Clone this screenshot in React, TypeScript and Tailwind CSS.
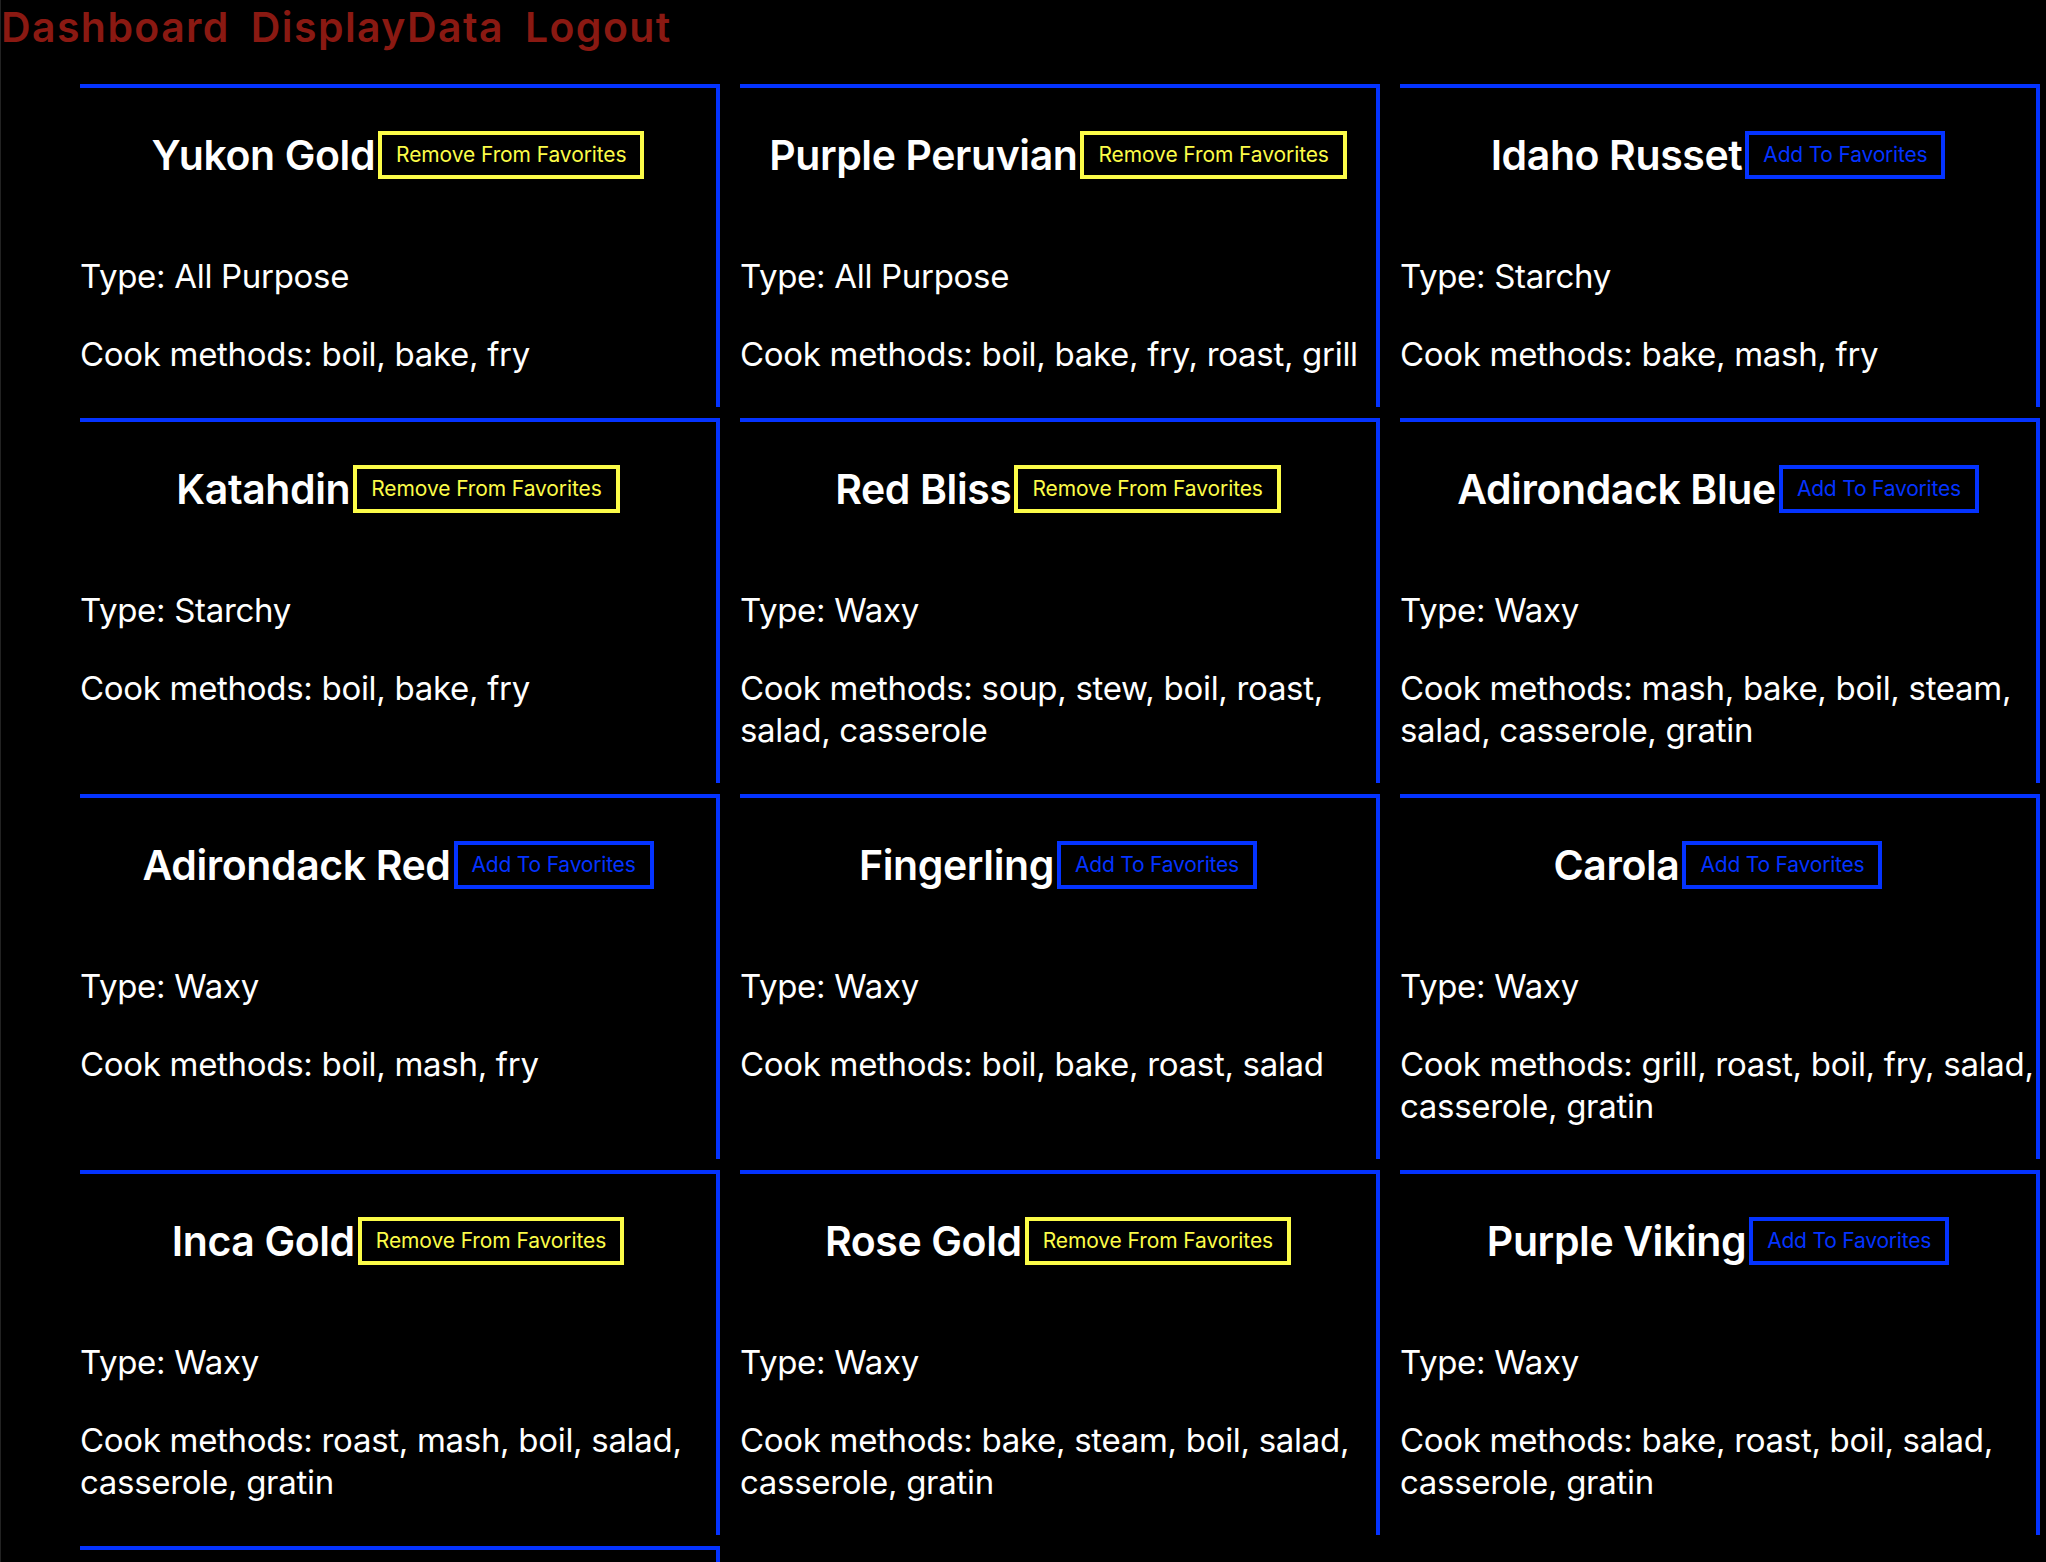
import React from "react";

type Potato = {
  name: string;
  type: string;
  methods: string[];
  favorite: boolean;
};

const potatoes: Potato[] = [
  { name: "Yukon Gold", type: "All Purpose", methods: ["boil", "bake", "fry"], favorite: true },
  { name: "Purple Peruvian", type: "All Purpose", methods: ["boil", "bake", "fry", "roast", "grill"], favorite: true },
  { name: "Idaho Russet", type: "Starchy", methods: ["bake", "mash", "fry"], favorite: false },
  { name: "Katahdin", type: "Starchy", methods: ["boil", "bake", "fry"], favorite: true },
  { name: "Red Bliss", type: "Waxy", methods: ["soup", "stew", "boil", "roast", "salad", "casserole"], favorite: true },
  { name: "Adirondack Blue", type: "Waxy", methods: ["mash", "bake", "boil", "steam", "salad", "casserole", "gratin"], favorite: false },
  { name: "Adirondack Red", type: "Waxy", methods: ["boil", "mash", "fry"], favorite: false },
  { name: "Fingerling", type: "Waxy", methods: ["boil", "bake", "roast", "salad"], favorite: false },
  { name: "Carola", type: "Waxy", methods: ["grill", "roast", "boil", "fry", "salad", "casserole", "gratin"], favorite: false },
  { name: "Inca Gold", type: "Waxy", methods: ["roast", "mash", "boil", "salad", "casserole", "gratin"], favorite: true },
  { name: "Rose Gold", type: "Waxy", methods: ["bake", "steam", "boil", "salad", "casserole", "gratin"], favorite: true },
  { name: "Purple Viking", type: "Waxy", methods: ["bake", "roast", "boil", "salad", "casserole", "gratin"], favorite: false },
  { name: "Kennebec", type: "Starchy", methods: ["fry", "bake", "mash"], favorite: false },
];

const PotatoCard = ({ potato }: { potato: Potato }) => {
  return (
    <div className="border-t-4 border-r-4 border-[#0433ff] pb-[32px]">
      {/* title + favorite toggle */}
      <div className="mt-[43px] flex items-center justify-center gap-[3px]">
        <h2 className="text-[41px] font-semibold leading-[48px] tracking-[-0.4px] text-white">
          {potato.name}
        </h2>
        {potato.favorite ? (
          <button className="h-[48px] border-4 border-[#fcfc48] px-[14px] text-[21px] leading-[26px] tracking-[-0.1px] text-[#fcfc48]">
            Remove From Favorites
          </button>
        ) : (
          <button className="h-[48px] border-4 border-[#0433ff] px-[14px] text-[21px] leading-[26px] tracking-[-0.2px] text-[#0433ff]">
            Add To Favorites
          </button>
        )}
      </div>
      <p className="mt-[76px] text-[33px] leading-[42px] tracking-[-0.3px] text-white">
        Type: {potato.type}
      </p>
      <p className="mt-[36px] text-[33px] leading-[42px] tracking-[-0.3px] text-white">
        Cook methods: {potato.methods.join(", ")}
      </p>
    </div>
  );
};

export default function App() {
  return (
    <div className="min-h-screen border-l border-[#222222] bg-black font-['Inter','Noto_Sans',sans-serif]">
      {/* Nav */}
      <nav className="flex gap-[21px] pt-[2px] text-[41px] font-semibold leading-[50px] tracking-[1.4px] text-[#8a1912]">
        <a href="#">Dashboard</a>
        <a href="#">DisplayData</a>
        <a href="#">Logout</a>
      </nav>

      {/* Cards */}
      <div className="mt-[32px] grid grid-cols-[repeat(3,640px)] gap-x-[20px] gap-y-[11px] pl-[79px]">
        {potatoes.map((potato) => (
          <PotatoCard key={potato.name} potato={potato} />
        ))}
      </div>
    </div>
  );
}
